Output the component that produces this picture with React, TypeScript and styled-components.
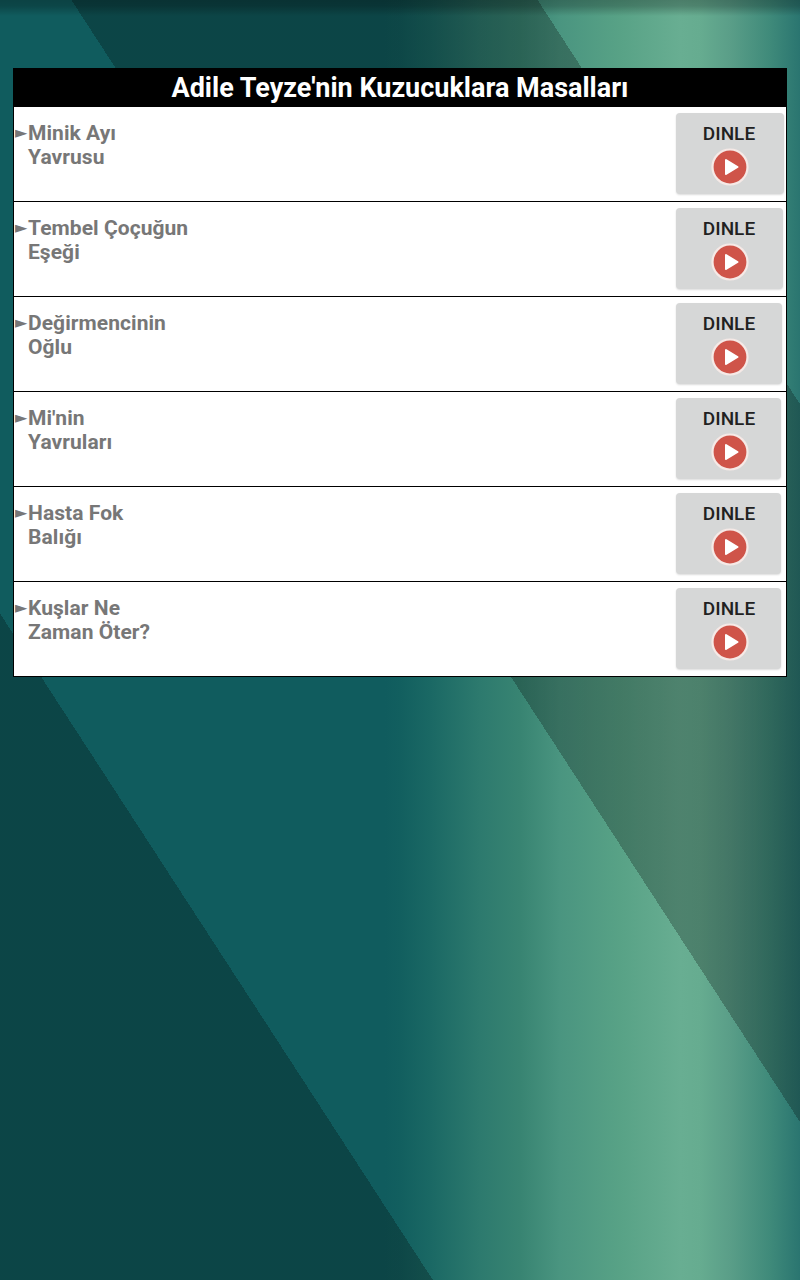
import React from 'react';
import styled, { createGlobalStyle } from 'styled-components';

const GlobalStyle = createGlobalStyle`
  html, body {
    margin: 0;
    padding: 0;
  }

  body {
    font-family: Roboto, "Liberation Sans", sans-serif;
  }
`;

const Page = styled.div`
  box-sizing: border-box;
  min-height: 100vh;
  padding: 68px 13px 0;
  background-color: #105c5e;
  background-image:
    linear-gradient(to bottom, rgba(0, 0, 0, 0.28) 0, rgba(0, 0, 0, 0.24) 6px, rgba(0, 0, 0, 0) 16px),
    linear-gradient(
      57deg,
      rgba(0, 0, 0, 0.25) 0,
      rgba(0, 0, 0, 0.25) 363px,
      rgba(0, 0, 0, 0) 363px,
      rgba(0, 0, 0, 0) 757px,
      rgba(0, 0, 0, 0.25) 757px,
      rgba(0, 0, 0, 0.25) 1148px,
      rgba(0, 0, 0, 0) 1148px
    ),
    linear-gradient(
      to right,
      #105c5e 0,
      #105c5e 385px,
      #125f5f 400px,
      #1a6864 430px,
      #2d7a6e 480px,
      #388472 520px,
      #4a9580 560px,
      #58a286 620px,
      #68ae92 680px,
      #66ac90 700px,
      #5a9e88 730px,
      #3f8a7a 770px,
      #2a7570 800px
    );
`;

const Panel = styled.section`
  box-sizing: border-box;
  width: 774px;
  border: 1px solid #000;
  background: #fff;
`;

const Header = styled.h1`
  margin: 0;
  height: 38px;
  background: #000;
  color: #fff;
  font-size: 27px;
  font-weight: 700;
  line-height: 38px;
  text-align: center;
`;

const Row = styled.div`
  display: flex;
  align-items: flex-start;
  box-sizing: border-box;
  height: 95px;
  padding-top: 6px;
  border-bottom: 1px solid #000;

  &:last-child {
    border-bottom: none;
    height: 94px;
  }
`;

const Story = styled.div`
  flex: 0 0 662px;
  display: flex;
  padding-top: 8px;
  color: #777;
`;

const Pointer = styled.span`
  flex: 0 0 13px;
  padding-left: 1px;
  font-family: "DejaVu Sans", sans-serif;
  font-size: 16px;
  line-height: 24px;
`;

const StoryTitle = styled.div`
  font-size: 21px;
  font-weight: 700;
  letter-spacing: 0.06px;
  line-height: 24px;
`;

const ListenButton = styled.button<{ $spare: number }>`
  display: flex;
  flex-direction: column;
  align-items: center;
  box-sizing: border-box;
  width: ${(p) => 103 + p.$spare}px;
  height: 81px;
  margin: 0;
  padding: 9px ${(p) => p.$spare}px 0 3px;
  border: none;
  border-radius: 4px;
  background: #d6d7d7;
  box-shadow: 0 1px 2px rgba(0, 0, 0, 0.14);
  color: #212121;
  font-family: inherit;
  font-size: 19px;
  font-weight: 500;
  line-height: 24px;
`;

const PlayIcon = styled.svg`
  display: block;
  width: 38px;
  height: 38px;
  margin: 2px 0 0 2px;
`;

const stories = [
  { lines: ['Minik Ayı', 'Yavrusu'], spare: 5 },
  { lines: ['Tembel Çoçuğun', 'Eşeği'], spare: 4 },
  { lines: ['Değirmencinin', 'Oğlu'], spare: 3 },
  { lines: ["Mi'nin", 'Yavruları'], spare: 2 },
  { lines: ['Hasta Fok', 'Balığı'], spare: 2 },
  { lines: ['Kuşlar Ne', 'Zaman Öter?'], spare: 2 },
];

const App: React.FC = () => {
  return (
    <Page>
      <GlobalStyle />
      <Panel>
        <Header>Adile Teyze'nin Kuzucuklara Masalları</Header>
        {stories.map((story) => (
          <Row key={story.lines[0]}>
            <Story>
              <Pointer>►</Pointer>
              <StoryTitle>
                {story.lines[0]}
                <br />
                {story.lines[1]}
              </StoryTitle>
            </Story>
            <ListenButton $spare={story.spare}>
              DINLE
              <PlayIcon viewBox="0 0 38 38">
                <circle cx="19" cy="19" r="17.5" fill="#cf5449" stroke="#f6e9e6" strokeWidth="2.2" />
                <path d="M15 12 L26.5 19 L15 26 Z" fill="#fff" stroke="#fff" strokeWidth="2" strokeLinejoin="round" />
              </PlayIcon>
            </ListenButton>
          </Row>
        ))}
      </Panel>
    </Page>
  );
};

export default App;
